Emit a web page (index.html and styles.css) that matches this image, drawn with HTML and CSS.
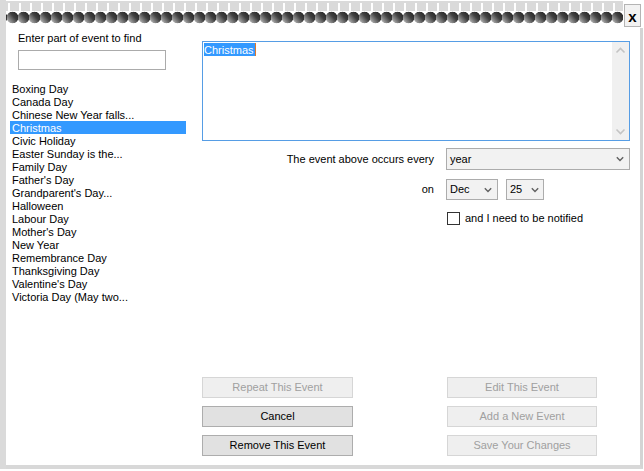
FILE: index.html
```html
<!DOCTYPE html>
<html>
<head>
<meta charset="utf-8">
<title>Events</title>
<link rel="stylesheet" href="styles.css">
</head>
<body>
<div class="window">
  <div class="binding">
    <div class="rings"></div>
    <div class="close">x</div>
  </div>
  <div class="frame">
    <div class="left">
      <div class="find-label">Enter part of event to find</div>
      <div class="find-input"></div>
      <ul class="events">
        <li>Boxing Day</li>
        <li>Canada Day</li>
        <li>Chinese New Year falls...</li>
        <li class="selected">Christmas</li>
        <li>Civic Holiday</li>
        <li>Easter Sunday is the...</li>
        <li>Family Day</li>
        <li>Father's Day</li>
        <li>Grandparent's Day...</li>
        <li>Halloween</li>
        <li>Labour Day</li>
        <li>Mother's Day</li>
        <li>New Year</li>
        <li>Remembrance Day</li>
        <li>Thanksgiving Day</li>
        <li>Valentine's Day</li>
        <li>Victoria Day (May two...</li>
      </ul>
    </div>
    <div class="right">
      <div class="memo">
        <div class="memo-text"><span class="sel">Christmas</span></div>
        <div class="vscroll">
          <svg class="arrow" width="17" height="17" viewBox="0 0 17 17"><polyline points="4.5,10.5 8.5,6.5 12.5,10.5" fill="none" stroke="#c4c4c4" stroke-width="1.6"/></svg>
          <svg class="arrow" width="17" height="17" viewBox="0 0 17 17"><polyline points="4.5,6.5 8.5,10.5 12.5,6.5" fill="none" stroke="#c4c4c4" stroke-width="1.6"/></svg>
        </div>
      </div>
      <div class="row row-every">
        <span class="lbl">The event above occurs every</span>
        <div class="combo combo-year"><span>year</span><svg width="8" height="6" viewBox="0 0 8 6"><polyline points="0.8,1.2 4,4.4 7.2,1.2" fill="none" stroke="#606060" stroke-width="1.4"/></svg></div>
      </div>
      <div class="row row-on">
        <span class="lbl">on</span>
        <div class="combo combo-month"><span>Dec</span><svg width="8" height="6" viewBox="0 0 8 6"><polyline points="0.8,1.2 4,4.4 7.2,1.2" fill="none" stroke="#606060" stroke-width="1.4"/></svg></div>
        <div class="combo combo-day"><span>25</span><svg width="8" height="6" viewBox="0 0 8 6"><polyline points="0.8,1.2 4,4.4 7.2,1.2" fill="none" stroke="#606060" stroke-width="1.4"/></svg></div>
      </div>
      <div class="row row-notify">
        <span class="check"></span>
        <span class="notify-text">and I need to be notified</span>
      </div>
      <div class="buttons">
        <div class="btn disabled">Repeat This Event</div>
        <div class="btn disabled">Edit This Event</div>
        <div class="btn">Cancel</div>
        <div class="btn disabled">Add a New Event</div>
        <div class="btn">Remove This Event</div>
        <div class="btn disabled">Save Your Changes</div>
      </div>
    </div>
  </div>
</div>
</body>
</html>
```
FILE: styles.css
```css
* { box-sizing: border-box; }

html, body {
  margin: 0;
  padding: 0;
}

body {
  width: 644px;
  height: 471px;
  overflow: hidden;
  background: #ffffff;
  font-family: "Liberation Sans", Arial, sans-serif;
  font-size: 11px;
  line-height: 13px;
  color: #000000;
}

.window {
  width: 643px;
  height: 469px;
  display: flex;
  flex-direction: column;
  border-left: 6px solid #dadada;
}

/* spiral binding */
.binding {
  height: 28px;
  flex: none;
  display: flex;
  align-items: flex-start;
}

.rings {
  width: 617px;
  height: 28px;
  background-color: #ffffff;
  background-image:
    radial-gradient(circle at 5.5px 6.5px, rgba(255,255,255,0) 5.5px, #ffffff 6.1px),
    linear-gradient(to top right, #dcdcdc 0%, #8a8a8a 28%, #404040 58%, #1e1e1e 100%),
    linear-gradient(to right, rgba(255,255,255,0) 1px, #ffffff 1px, #ffffff 3.5px, rgba(255,255,255,0) 3.5px),
    linear-gradient(#dadada, #dadada);
  background-size: 11px 13px, 11px 13px, 11px 10px, 100% 12px;
  background-position: 1px 11px, 1px 11px, 1px 3px, 0 1px;
  background-repeat: repeat-x, repeat-x, repeat-x, no-repeat;
}

.close {
  width: 17px;
  height: 23px;
  margin: 4px 2px 0 1px;
  padding-top: 2px;
  border: 1px solid #b4b4b4;
  background: #f2f2f2;
  font-weight: bold;
  font-size: 15px;
  line-height: 19px;
  text-align: center;
  color: #000000;
}

.frame {
  flex: 1;
  display: flex;
  border-right: 3px solid #d4d4d4;
  border-bottom: 4px solid #d8d8d8;
}

/* left column */
.left {
  width: 196px;
  flex: none;
  display: flex;
  flex-direction: column;
}

.find-label {
  margin: 4px 0 0 12px;
}

.find-input {
  width: 148px;
  height: 20px;
  margin: 5px 0 0 12px;
  border: 1px solid #ababab;
  background: #ffffff;
}

.events {
  list-style: none;
  margin: 12px 0 0 4px;
  padding: 0;
  width: 176px;
}

.events li {
  height: 13px;
  line-height: 13px;
  padding: 1px 0 0 2px;
  white-space: nowrap;
}

.events li.selected {
  background: #3399ff;
  color: #ffffff;
}

/* right column */
.right {
  flex: 1;
  display: flex;
  flex-direction: column;
  padding-right: 10px;
}

.memo {
  margin-top: 13px;
  height: 100px;
  border: 1px solid #569de5;
  display: flex;
}

.memo-text {
  flex: 1;
  padding: 1px 0 0 1px;
}

.sel {
  display: inline-block;
  background: #3399ff;
  color: #ffffff;
  height: 13px;
  line-height: 13px;
  padding: 1px 1px 0 0;
  border-right: 1px solid #e0782a;
}

.vscroll {
  width: 17px;
  background: #f0f0f0;
  display: flex;
  flex-direction: column;
  justify-content: space-between;
}

.arrow { display: block; }

.row {
  display: flex;
  align-items: center;
}

.lbl {
  width: 232px;
  text-align: right;
  white-space: nowrap;
}

.row-every {
  margin-top: 7px;
  height: 22px;
}

.combo {
  height: 22px;
  border: 1px solid #acacac;
  background: #f2f2f2;
  display: flex;
  align-items: center;
  justify-content: space-between;
  padding: 0 5px 0 3px;
}

.combo svg { display: block; }

.combo-year {
  width: 184px;
  margin-left: 12px;
}

.row-on {
  margin-top: 9px;
  height: 21px;
}

.row-on .combo { height: 21px; }

.combo-month {
  width: 52px;
  margin-left: 12px;
}

.combo-day {
  width: 38px;
  margin-left: 8px;
  padding-right: 4px;
}

.row-notify {
  margin-top: 12px;
  height: 13px;
}

.check {
  width: 13px;
  height: 13px;
  margin-left: 245px;
  border: 1px solid #333333;
  background: #ffffff;
}

.notify-text {
  margin-left: 5px;
}

.buttons {
  margin-top: auto;
  margin-bottom: 9px;
  display: grid;
  grid-template-columns: 151px 150px;
  grid-auto-rows: 21px;
  column-gap: 94px;
  row-gap: 8px;
}

.btn {
  border: 1px solid #adadad;
  background: #e1e1e1;
  display: flex;
  align-items: center;
  justify-content: center;
  white-space: nowrap;
}

.btn.disabled {
  border-color: #d6d6d6;
  background: #efefef;
  color: #a0a0a0;
}
```
